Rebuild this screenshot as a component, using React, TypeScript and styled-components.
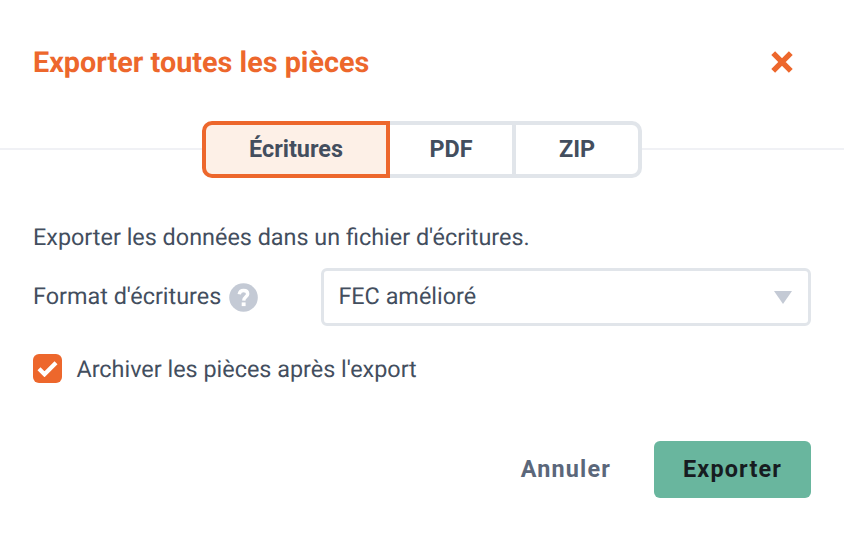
import React from "react";
import styled, { createGlobalStyle } from "styled-components";

const Global = createGlobalStyle`
  *, *::before, *::after { box-sizing: border-box; }
  body { margin: 0; background: #fff; font-family: Roboto, "Liberation Sans", sans-serif; color: #434e5e; -webkit-font-smoothing: antialiased; text-rendering: geometricPrecision; }
`;

const Dialog = styled.main`
  width: 844px;
  height: 534px;
  background: #fff;
  overflow: hidden;
`;

const Header = styled.header`
  display: flex;
  justify-content: space-between;
  align-items: center;
  height: 121px;
  padding: 3px 50px 0 33px;
`;

const Title = styled.h1`
  margin: 2px 0 0;
  font-size: 28.8px;
  line-height: 34px;
  font-weight: 700;
  color: #ed672c;
`;

const CloseButton = styled.button`
  display: flex;
  padding: 0;
  border: 0;
  background: none;
  color: #ed672c;
`;

const TabRow = styled.div`
  display: flex;
  align-items: center;
  height: 57px;
`;

const Rule = styled.span`
  flex: 1;
  height: 2px;
  margin-bottom: 1px;
  background: #f0f1f5;
`;

const Tabs = styled.div`
  display: flex;
  width: 440px;
  height: 57px;
`;

const Tab = styled.button<{ $active?: boolean; $last?: boolean }>`
  width: ${(p) => (p.$active ? 188 : p.$last ? 130 : 122)}px;
  padding: 0 0 1px;
  border: 4px solid ${(p) => (p.$active ? "#ed672c" : "#e1e5ea")};
  border-width: ${(p) => (p.$active || p.$last ? "4px" : "4px 0")};
  border-radius: ${(p) => (p.$active ? "10px 0 0 10px" : p.$last ? "0 10px 10px 0" : "0")};
  background: ${(p) => (p.$active ? "#fdf0e7" : "#fff")};
  color: #434e5e;
  font: 700 23.4px/28px Roboto, sans-serif;
`;

const Body = styled.section`
  padding: 43px 33px 0;
  font-size: 23.4px;
  line-height: 32px;
`;

const Intro = styled.p`
  margin: 0;
`;

const Field = styled.div`
  display: grid;
  grid-template-columns: 288px 490px;
  align-items: center;
  margin-top: 15px;
`;

const Label = styled.label`
  display: flex;
  align-items: center;
  gap: 7.5px;
  padding-bottom: 2px;

  svg {
    margin-top: 2px;
  }
`;

const Select = styled.div`
  display: flex;
  justify-content: space-between;
  align-items: center;
  height: 58px;
  padding: 0 16px 2px 14.4px;
  border: 3px solid #e1e5ea;
  border-radius: 6px;

  svg {
    margin-top: 3px;
  }
`;

const CheckRow = styled.label`
  display: flex;
  align-items: center;
  gap: 14.4px;
  height: 32px;
  margin-top: 27px;
`;

const Box = styled.span`
  display: flex;
  align-items: center;
  justify-content: center;
  width: 29px;
  height: 29px;
  margin-bottom: 1px;
  border-radius: 6px;
  background: #ed672c;
`;

const Footer = styled.footer`
  display: flex;
  justify-content: flex-end;
  gap: 43px;
  margin-top: 56px;
  padding-right: 33px;
`;

const Action = styled.button<{ $primary?: boolean }>`
  width: ${(p) => (p.$primary ? "157px" : "auto")};
  height: 57px;
  padding: 0 0 1px;
  border: 0;
  border-radius: 6px;
  background: ${(p) => (p.$primary ? "#69b69e" : "transparent")};
  color: ${(p) => (p.$primary ? "#171c21" : "#5b677a")};
  font: 700 23.4px/28px Roboto, sans-serif;
  letter-spacing: 1.17px;
`;

export default function App() {
  return (
    <>
      <Global />
      <Dialog>
        <Header>
          <Title>Exporter toutes les pièces</Title>
          <CloseButton aria-label="Fermer">
            <svg width="24" height="24" viewBox="0 0 24 24" stroke="currentColor" strokeWidth="5.4">
              <path d="M3.200 3.200 20.800 20.800M20.800 3.200 3.200 20.800" />
            </svg>
          </CloseButton>
        </Header>
        <TabRow>
          <Rule />
          <Tabs>
            <Tab $active>Écritures</Tab>
            <Tab>PDF</Tab>
            <Tab $last>ZIP</Tab>
          </Tabs>
          <Rule />
        </TabRow>
        <Body>
          <Intro>Exporter les données dans un fichier d'écritures.</Intro>
          <Field>
            <Label>
              <span>Format d'écritures</span>
              <svg width="29" height="29" viewBox="0 0 29 29">
                <circle cx="14.500" cy="14.500" r="14.300" fill="#c4cad5" />
                <path
                  d="M10.200 11.300C10.700 8.600 12.200 7.500 14.500 7.500C17.200 7.500 18.700 9 18.700 11C18.700 13.700 14.800 14 14.700 17.600"
                  fill="none"
                  stroke="#fff"
                  strokeWidth="3.400"
                />
                <rect x="12.700" y="19.400" width="3.900" height="3.700" fill="#fff" />
              </svg>
            </Label>
            <Select>
              <span>FEC amélioré</span>
              <svg width="18" height="13" viewBox="0 0 18 13"><path fill="#c4cad5" d="M0 0H18L9 13Z" /></svg>
            </Select>
          </Field>
          <CheckRow>
            <Box>
              <svg width="21" height="17" viewBox="0 0 21 17" fill="none" stroke="#fff" strokeWidth="4.200">
                <path d="m2 8.800 5.500 5.500L19 2.800" />
              </svg>
            </Box>
            <span>Archiver les pièces après l'export</span>
          </CheckRow>
        </Body>
        <Footer>
          <Action>Annuler</Action>
          <Action $primary>Exporter</Action>
        </Footer>
      </Dialog>
    </>
  );
}
